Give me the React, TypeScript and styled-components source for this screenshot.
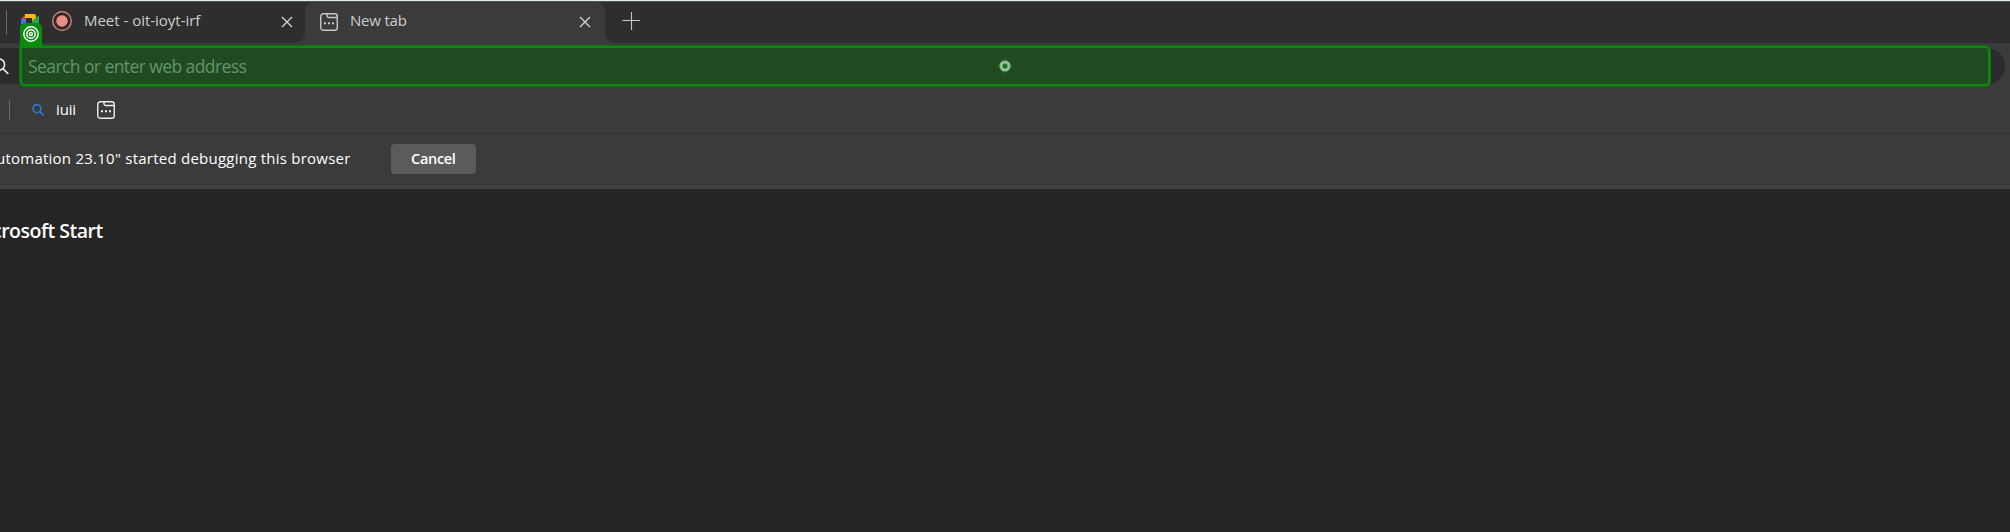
import React from "react";
import styled, { createGlobalStyle } from "styled-components";

const GlobalStyle = createGlobalStyle`
  *, *::before, *::after { box-sizing: border-box; }
  html, body { margin: 0; padding: 0; background: #252525; overflow: hidden; }
  body { font-family: "Open Sans", "Noto Sans", sans-serif; color: #fff; }
  svg { display: block; flex: none; }
`;

const Window = styled.div`
  width: 2010px;
  height: 532px;
  display: flex;
  flex-direction: column;
  overflow: hidden;
  background: #252525;
`;

const TabStrip = styled.div`
  flex: none;
  height: 43px;
  display: flex;
  background: #3b3b3b;
  border-top: 1px solid #e9efed;
`;

const StripEdge = styled.div`
  width: 305px;
  display: flex;
  align-items: flex-start;
  background: #2e2e2e;
  border-top: 1px solid #4d5150;
  border-bottom-right-radius: 11px;
  padding-left: 6px;
`;

const StripRest = styled.div`
  flex: 1;
  background: #2e2e2e;
  border-top: 1px solid #4d5150;
  border-bottom-left-radius: 11px;
  padding: 10px 0 0 17px;
`;

const ActiveTab = styled.div`
  width: 300px;
  display: flex;
  align-items: flex-start;
  background: linear-gradient(#2e2e2e 50%, #3b3b3b 50%);
  border-top: 1px solid #4d5150;
  position: relative;
  z-index: 0;
  &::before {
    content: "";
    position: absolute;
    z-index: -1;
    inset: 0;
    background: #3b3b3b;
    border-radius: 9px 9px 0 0;
  }
`;

const Divider = styled.div<{ $h: number; $top: number }>`
  flex: none;
  width: 1px;
  height: ${(p) => p.$h}px;
  margin-top: ${(p) => p.$top}px;
  background: #6b6b6b;
`;

const Favicon = styled.div<{ $left: number; $top: number }>`
  flex: none;
  margin: ${(p) => p.$top}px 0 0 ${(p) => p.$left}px;
`;

const Label = styled.span<{
  $size: number; $line: number; $left?: number; $top?: number; $width?: number;
  $spacing?: number; $color?: string; $weight?: number;
}>`
  flex: none;
  white-space: pre;
  font-size: ${(p) => p.$size}px;
  line-height: ${(p) => p.$line}px;
  font-weight: ${(p) => p.$weight ?? 400};
  letter-spacing: ${(p) => p.$spacing ?? 0}px;
  color: ${(p) => p.$color ?? "#fff"};
  margin: ${(p) => p.$top ?? 0}px 0 0 ${(p) => p.$left ?? 0}px;
  width: ${(p) => (p.$width ? `${p.$width}px` : "auto")};
`;

const AddressRow = styled.div`
  flex: none;
  height: 46px;
  display: flex;
  background: #3b3b3b;
  padding-top: 5px;
`;

const AddressBar = styled.div`
  width: 2005px;
  height: 36px;
  display: flex;
  align-items: flex-start;
  background: #2b2b2b;
  border-radius: 0 18px 18px 0;
`;

const SearchGlyph = styled.div`
  width: 20px;
  padding-top: 10px;
  svg { margin-left: -8px; }
`;

const Highlight = styled.div`
  position: relative;
  width: 1970px;
  height: 40px;
  margin-top: -2px;
  display: flex;
  background: #214a23;
  border: 2px solid #078c0d;
  border-radius: 0 5px 5px 5px;
  box-shadow: 0 0 0 1px #186a1b;
`;

const TargetBadge = styled.div`
  position: absolute;
  left: -2px;
  top: -25px;
  width: 22px;
  height: 24px;
  padding: 3px 0 0 3px;
  background: #078c0d;
  border-radius: 5px 5px 0 0;
`;

const CenterMark = styled.div`
  position: absolute;
  left: 973.5px;
  top: 9px;
`;

const FavoritesRow = styled.div`
  flex: none;
  height: 44px;
  display: flex;
  align-items: flex-start;
  background: #3b3b3b;
  padding-left: 9px;
`;

const InfoBar = styled.div`
  flex: none;
  height: 52px;
  display: flex;
  align-items: flex-start;
  background: #3b3b3b;
  border-top: 1px solid #363636;
  border-bottom: 1px solid #363636;
`;

const CancelButton = styled.button`
  width: 85px;
  height: 30px;
  margin-top: 10px;
  padding: 0 0 0 20px;
  display: flex;
  border: 0;
  border-radius: 4px;
  background: #5b5b5b;
  font-family: inherit;
`;

const InfoEdge = styled.div`
  flex: none;
  height: 4px;
  background: #404040;
`;

const Page = styled.main`
  flex: 1;
  display: flex;
  align-items: flex-start;
`;

const MeetIcon = () => (
  <svg width="20" height="18" viewBox="0 0 20 18">
    <path d="M1 5 6 0V5H1Z" fill="#e34336" />
    <path d="M5 0H14a2 2 0 0 1 2 2V7H12V4H5Z" fill="#fbbb09" />
    <path d="M1 5H6V14H1Z" fill="#3c78ec" />
    <path d="M12 7 18 2q1-.6 1 .6V14H12Z" fill="#2ba24c" />
  </svg>
);

const RecordIcon = () => (
  <svg width="20" height="20" viewBox="0 0 20 20">
    <circle cx="10" cy="10" r="9.3" fill="none" stroke="#ee8d82" strokeWidth="1.2" />
    <circle cx="10" cy="10" r="5.7" fill="#ee8d82" />
  </svg>
);

const PageIcon = ({ color }: { color: string }) => (
  <svg width="18" height="18" viewBox="0 0 18 18" fill="none" stroke={color} strokeWidth="1.4">
    <rect x=".75" y=".75" width="16.5" height="16.5" rx="2.6" />
    <path d="M7 .8V2.8Q7 4.5 8.7 4.5H17.2" />
    <path d="M4 10.2h2M8 10.2h2M12 10.2h2" strokeWidth="2" />
  </svg>
);

const CloseIcon = () => (
  <svg width="12" height="12" viewBox="0 0 12 12">
    <path d="M1 1 11 11M11 1 1 11" stroke="#d0d0d0" strokeWidth="1.4" />
  </svg>
);

const PlusIcon = () => (
  <svg width="18" height="18" viewBox="0 0 18 18">
    <path d="M9.5 0V18M.5 8.5H18" stroke="#c6c6c6" strokeWidth="1.1" />
  </svg>
);

const LensIcon = ({ size, color, weight }: { size: number; color: string; weight: number }) => (
  <svg width={size} height={size} viewBox="0 0 17 17" fill="none" stroke={color} strokeWidth={weight}>
    <circle cx="7" cy="6.6" r="5.6" />
    <path d="M11 10.6 16.3 16" />
  </svg>
);

const TargetIcon = () => (
  <svg width="16" height="16" viewBox="0 0 16 16" fill="none" stroke="#fff" strokeWidth="1.4">
    <circle cx="8" cy="8" r="7.2" />
    <circle cx="8" cy="8" r="4.2" />
    <circle cx="8" cy="8" r="1.5" />
  </svg>
);

const MarkIcon = () => (
  <svg width="18" height="18" viewBox="0 0 18 18">
    <path d="M9 .5 17.5 9 9 17.5 .5 9Z" fill="#0b6b12" />
    <circle cx="9" cy="9" r="4" fill="#16791b" stroke="#a2b5a2" strokeWidth="3" />
  </svg>
);

export default function App() {
  return (
    <Window>
      <GlobalStyle />
      <TabStrip>
        <StripEdge>
          <Divider $h={25} $top={8} />
          <Favicon $left={13} $top={12}><MeetIcon /></Favicon>
          <Favicon $left={12} $top={9}><RecordIcon /></Favicon>
          <Label $size={15} $line={20} $left={12} $top={8} $width={196} $spacing={-0.02} $color="#cdcdcd">Meet - oit-ioyt-irf</Label>
          <Favicon $left={1} $top={14}><CloseIcon /></Favicon>
        </StripEdge>
        <ActiveTab>
          <Favicon $left={15} $top={11}><PageIcon color="#c8c8c8" /></Favicon>
          <Label $size={15} $line={20} $left={12} $top={8} $width={228} $spacing={-0.2} $color="#cdcdcd">New tab</Label>
          <Favicon $left={1} $top={14}><CloseIcon /></Favicon>
        </ActiveTab>
        <StripRest><PlusIcon /></StripRest>
      </TabStrip>
      <AddressRow>
        <AddressBar>
          <SearchGlyph><LensIcon size={17} color="#efefef" weight={1.5} /></SearchGlyph>
          <Highlight>
            <Label $size={17.5} $line={24} $left={6} $top={6} $spacing={-0.58} $color="#639567">Search or enter web address</Label>
            <TargetBadge><TargetIcon /></TargetBadge>
            <CenterMark><MarkIcon /></CenterMark>
          </Highlight>
        </AddressBar>
      </AddressRow>
      <FavoritesRow>
        <Divider $h={20} $top={11} />
        <Favicon $left={22} $top={15}><LensIcon size={12} color="#2d78d2" weight={2.5} /></Favicon>
        <Label $size={15} $line={20} $left={12} $top={10} $width={39} $spacing={-0.15}>iuii</Label>
        <Favicon $left={2} $top={12}><PageIcon color="#ededed" /></Favicon>
      </FavoritesRow>
      <InfoBar>
        <Label $size={15} $line={20} $left={-4} $top={14} $width={395} $spacing={0.24}>utomation 23.10" started debugging this browser</Label>
        <CancelButton><Label $size={14.5} $line={20} $top={5} $weight={600} $spacing={-0.3}>Cancel</Label></CancelButton>
      </InfoBar>
      <InfoEdge />
      <Page>
        <Label $size={19.5} $line={26} $left={-8} $top={29} $weight={600} $spacing={-0.5}>crosoft Start</Label>
      </Page>
    </Window>
  );
}
